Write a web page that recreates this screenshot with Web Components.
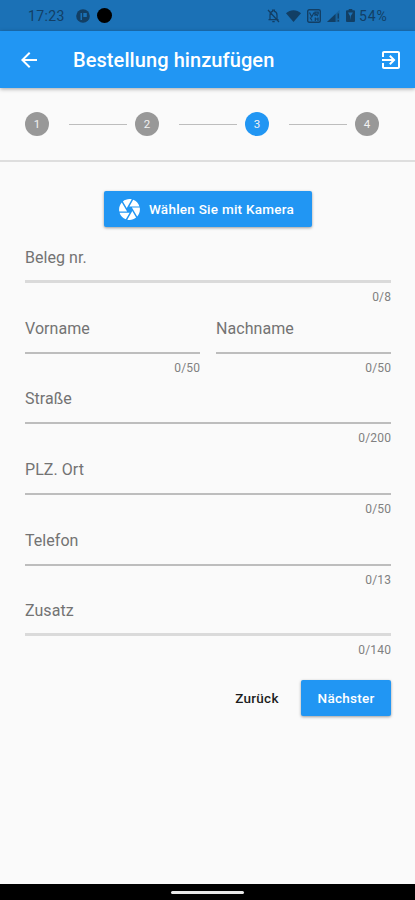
<!DOCTYPE html>
<html lang="de">
<head>
<meta charset="utf-8">
<meta name="viewport" content="width=device-width, initial-scale=1">
<title>Bestellung hinzufügen</title>
<style>
  html, body { margin: 0; height: 100%; }
  body {
    --primary: #2196f3;
    --primary-dark: #1b71b6;
    --surface: #fafafa;
    --muted: #737373;
    font-family: Roboto, "Liberation Sans", sans-serif;
    background: var(--surface);
    overflow: hidden;
  }
</style>
</head>
<body>
<order-screen></order-screen>

<script>
const define = (name, html) => {
  const template = document.createElement('template');
  template.innerHTML = html;
  customElements.define(name, class extends HTMLElement {
    constructor() {
      super();
      this.attachShadow({ mode: 'open' });
      this.shadowRoot.appendChild(template.content.cloneNode(true));
    }
    connectedCallback() {
      this.shadowRoot.querySelectorAll('[data-attr]').forEach((el) => {
        el.textContent = this.getAttribute(el.dataset.attr) || '';
      });
    }
  });
};

define('status-bar', `
<style>
  :host { display: flex; align-items: center; height: 31px; flex: none; box-sizing: border-box; padding: 0 27px 0 28px; background: var(--primary-dark); color: #123f65; font-size: 14px; letter-spacing: 0.35px; }
  svg { display: block; flex: none; fill: currentColor; }
  .time { width: 48px; }
  .dot { width: 15px; height: 15px; border-radius: 50%; background: #000; margin-left: 7px; }
  .right { display: flex; align-items: center; margin-left: auto; }
  .percent { width: 29px; white-space: nowrap; margin-left: 4px; letter-spacing: 0.9px; }
</style>
<span class="time">17:23</span>
<svg width="14" height="14" viewBox="0 0 14 14"><circle cx="7" cy="7" r="6.800"/><path d="M4.500 11V4H6v7zM7.300 4h3.500v4H7.300z" fill="#1b71b6"/></svg>
<span class="dot"></span>
<div class="right">
  <svg width="13" height="14" viewBox="0 0 13 14"><path d="M3 10.500V6.200C3 4 4.200 2.800 5.600 2.400V1.200h1.800v1.200C9 2.800 10 4 10 6.200v4.300M1.500 10.700h10M5.300 12.600h2.400M1 1l11 12" fill="none" stroke="currentColor" stroke-width="1.250"/></svg>
  <svg width="15" height="12" viewBox="0 0 15 12" style="margin-left:6px"><path d="M0 3.200C4.300-.7 10.700-.7 15 3.200L7.500 12z"/></svg>
  <svg width="14" height="14" viewBox="0 0 14 14" style="margin-left:6px"><rect x=".7" y=".7" width="12.600" height="12.600" rx="1.500" fill="none" stroke="currentColor" stroke-width="1.400"/><path d="M2.500 3.500 4.700 8 7 3.500M8 7V3.200h3.200V5H8.500L11 7M3 8.500l2 3M8.300 8.500V12M11 8.500V12M8.300 10H11" fill="none" stroke="currentColor" stroke-width="1.200"/></svg>
  <svg width="13" height="12" viewBox="0 0 13 12" style="margin-left:6px"><path d="M0 12 12.500 0v12z" opacity=".3"/><path d="M0 12 8.500 4v8z"/><path d="M11.300 3.500v5M11.300 10v1.500" stroke="currentColor" stroke-width="1.400"/></svg>
  <svg width="9" height="13" viewBox="0 0 9 13" style="margin-left:6px"><path d="M2.700 0h3.600v1.300H8q1 0 1 1V12q0 1-1 1H1q-1 0-1-1V2.300q0-1 1-1h1.700z"/><path d="M2 3.500h5L4.800 7v4.200L4 7z" fill="#1b71b6"/></svg>
  <span class="percent">54%</span>
</div>
`);

define('app-bar', `
<style>
  :host { display: flex; align-items: center; height: 57px; flex: none; box-sizing: border-box; padding: 0 12px 0 17px; background: var(--primary); color: #fff; box-shadow: 0 1px 4px rgba(0,0,0,.35); z-index: 1; }
  svg { display: block; flex: none; fill: currentColor; }
  h1 { flex: 1; margin: 1px 0 0 32px; font-size: 20px; line-height: 24px; font-weight: 500; letter-spacing: 0.08px; white-space: nowrap; }
</style>
<svg width="24" height="24" viewBox="0 0 24 24"><path d="M20 11H7.830l5.590-5.590L12 4l-8 8 8 8 1.410-1.410L7.830 13H20v-2z"/></svg>
<h1><slot></slot></h1>
<svg width="24" height="24" viewBox="0 0 24 24"><path d="M10.090 15.590L11.500 17l5-5-5-5-1.410 1.410L12.670 11H3v2h9.670l-2.580 2.590zM19 3H5c-1.110 0-2 .9-2 2v4h2V5h14v14H5v-4H3v4c0 1.100.89 2 2 2h14c1.100 0 2-.9 2-2V5c0-1.100-.9-2-2-2z"/></svg>
`);

define('step-dot', `
<style>
  :host { display: flex; align-items: center; justify-content: center; width: 24px; height: 24px; flex: none; border-radius: 50%; background: #989898; color: #f2f2f2; font-size: 11.5px; }
  :host([active]) { background: var(--primary); }
</style>
<slot></slot>
`);

define('step-line', `
<style>
  :host { display: block; flex: 1; height: 1px; margin: 0 8px 0 20px; background: #bdbdbd; }
</style>
`);

define('step-header', `
<style>
  :host { display: flex; align-items: center; height: 74px; flex: none; box-sizing: border-box; padding: 0 36px 0 25px; border-bottom: 2px solid #dedede; }
</style>
<slot></slot>
`);

define('action-button', `
<style>
  :host { display: block; }
  button { display: flex; align-items: center; justify-content: center; gap: 7px; width: 100%; height: 36px; margin: 0; padding: 0; border: 0; border-radius: 2px; background: none; color: #1c1c1c; font: 500 13.5px/16px Roboto, "Liberation Sans", sans-serif; letter-spacing: 0.25px; white-space: nowrap; }
  :host([raised]) button { background: var(--primary); color: #fff; box-shadow: 0 1px 3px rgba(0,0,0,.38); }
</style>
<button type="button"><slot name="icon"></slot><span><slot></slot></span></button>
`);

define('text-field', `
<style>
  :host { display: block; height: 70.64px; flex: 1; }
  .label { height: 40px; box-sizing: border-box; padding-top: 7px; font-size: 16px; line-height: 20px; color: var(--muted); letter-spacing: 0.05px; }
  .line { height: 2px; margin-bottom: -1px; background: #bdbdbd; }
  :host([soft]) .line { height: 3px; margin: -1px 0; background: #dadada; }
  .counter { padding-top: 8px; text-align: right; font-size: 12px; line-height: 14px; color: #808080; letter-spacing: 0.2px; margin-right: -0.2px; }
</style>
<div class="label" data-attr="label"></div>
<div class="line"></div>
<div class="counter" data-attr="counter"></div>
`);

define('nav-bar', `
<style>
  :host { display: flex; align-items: center; justify-content: center; height: 16px; flex: none; background: #000; }
  span { width: 73px; height: 3px; border-radius: 2px; background: #e8e8e8; margin-top: 1px; }
</style>
<span></span>
`);

define('order-screen', `
<style>
  :host { display: flex; flex-direction: column; height: 900px; background: var(--surface); }
  main { flex: 1; padding: 29px 24px 0 25px; }
  .camera { width: 208px; margin: 0 auto; }
  .camera svg { display: block; fill: currentColor; margin-left: -5px; }
  form { margin-top: 14px; }
  .row { display: flex; gap: 16px; }
  .actions { display: flex; justify-content: flex-end; margin-top: 15px; }
  .back { width: 88px; }
  .next { width: 90px; }
</style>
<status-bar></status-bar>
<app-bar>Bestellung hinzufügen</app-bar>
<step-header>
  <step-dot>1</step-dot><step-line></step-line>
  <step-dot>2</step-dot><step-line></step-line>
  <step-dot active>3</step-dot><step-line></step-line>
  <step-dot>4</step-dot>
</step-header>
<main>
  <action-button class="camera" raised>
    <svg slot="icon" width="25" height="25" viewBox="0 0 24 24"><path d="M9.400 10.500l4.770-8.260C13.470 2.090 12.750 2 12 2c-2.400 0-4.600.85-6.320 2.250l3.660 6.350.06-.1zM21.540 9c-.92-2.920-3.150-5.260-6-6.340L11.880 9h9.660zm.26 1h-7.490l.29.5 4.760 8.250C21 16.970 22 14.610 22 12c0-.69-.07-1.350-.2-2zM8.540 12l-3.900-6.750C3.010 7.030 2 9.390 2 12c0 .69.07 1.350.2 2h7.490l-1.150-2zm-6.080 3c.92 2.920 3.150 5.260 6 6.340L12.120 15H2.460zm11.270 0l-3.900 6.760c.7.15 1.420.24 2.170.24 2.400 0 4.600-.85 6.320-2.250l-3.660-6.350-.93 1.600z"/></svg>
    Wählen Sie mit Kamera
  </action-button>
  <form>
    <text-field soft label="Beleg nr." counter="0/8"></text-field>
    <div class="row">
      <text-field label="Vorname" counter="0/50"></text-field>
      <text-field label="Nachname" counter="0/50"></text-field>
    </div>
    <text-field label="Straße" counter="0/200"></text-field>
    <text-field label="PLZ. Ort" counter="0/50"></text-field>
    <text-field label="Telefon" counter="0/13"></text-field>
    <text-field soft label="Zusatz" counter="0/140"></text-field>
    <div class="actions">
      <action-button class="back">Zurück</action-button>
      <action-button class="next" raised>Nächster</action-button>
    </div>
  </form>
</main>
<nav-bar></nav-bar>
`);
</script>
</body>
</html>
